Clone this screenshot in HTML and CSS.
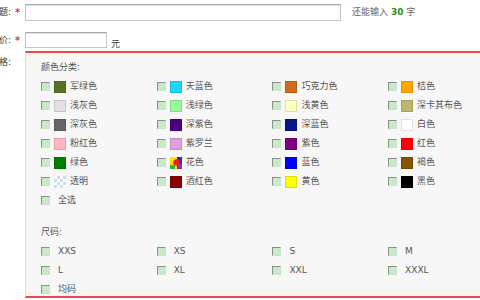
FILE: index.html
```html
<!DOCTYPE html>
<html lang="zh-CN">
<head>
<meta charset="utf-8">
<link rel="stylesheet" href="styles.css">
</head>
<body>
<div class="form">
  <div class="row row-title">
    <div class="lbl">标题:</div><span class="star">*</span>
    <input class="inp inp-title" type="text">
    <span class="hint">还能输入 <b>30</b> 字</span>
  </div>
  <div class="row row-price">
    <div class="lbl">一口价:</div><span class="star">*</span>
    <input class="inp inp-price" type="text">
    <span class="unit">元</span>
  </div>
  <div class="row row-spec">
    <div class="lbl lbl-spec">规格:</div><span class="spacer"></span>
    <div class="specbox">
      <div class="sec-title">颜色分类:</div>
      <div class="grid">
        <label class="item"><span class="cb"></span><span class="sw" style="background:#5b7224"></span>军绿色</label>
        <label class="item"><span class="cb"></span><span class="sw" style="background:#1ed6fb"></span>天蓝色</label>
        <label class="item"><span class="cb"></span><span class="sw" style="background:#d2691e"></span>巧克力色</label>
        <label class="item"><span class="cb"></span><span class="sw" style="background:#ffa500"></span>桔色</label>

        <label class="item"><span class="cb"></span><span class="sw" style="background:#e2e2e2"></span>浅灰色</label>
        <label class="item"><span class="cb"></span><span class="sw" style="background:#98fb98"></span>浅绿色</label>
        <label class="item"><span class="cb"></span><span class="sw" style="background:#ffffbe"></span>浅黄色</label>
        <label class="item"><span class="cb"></span><span class="sw" style="background:#bdb76b"></span>深卡其布色</label>

        <label class="item"><span class="cb"></span><span class="sw" style="background:#666666"></span>深灰色</label>
        <label class="item"><span class="cb"></span><span class="sw" style="background:#4b0082"></span>深紫色</label>
        <label class="item"><span class="cb"></span><span class="sw" style="background:#0a148a"></span>深蓝色</label>
        <label class="item"><span class="cb"></span><span class="sw" style="background:#ffffff"></span>白色</label>

        <label class="item"><span class="cb"></span><span class="sw" style="background:#ffb6c1"></span>粉红色</label>
        <label class="item"><span class="cb"></span><span class="sw" style="background:#dda0dd"></span>紫罗兰</label>
        <label class="item"><span class="cb"></span><span class="sw" style="background:#800080"></span>紫色</label>
        <label class="item"><span class="cb"></span><span class="sw" style="background:#ff0000"></span>红色</label>

        <label class="item"><span class="cb"></span><span class="sw" style="background:#008000"></span>绿色</label>
        <label class="item"><span class="cb"></span><span class="sw sw-flower"><svg width="12" height="12" viewBox="0 0 12 12"><rect width="12" height="12" fill="#ffe600"/><rect x="7" y="0" width="5" height="12" fill="#2b2bd8"/><rect x="8" y="7" width="4" height="5" fill="#9a2bb0"/><rect x="0" y="8" width="5" height="4" fill="#2fb84a"/><circle cx="6.5" cy="5.5" r="3.2" fill="#f01e1e"/></svg></span>花色</label>
        <label class="item"><span class="cb"></span><span class="sw" style="background:#0000ff"></span>蓝色</label>
        <label class="item"><span class="cb"></span><span class="sw" style="background:#855500"></span>褐色</label>

        <label class="item"><span class="cb"></span><span class="sw sw-clear"></span>透明</label>
        <label class="item"><span class="cb"></span><span class="sw" style="background:#8b0000"></span>酒红色</label>
        <label class="item"><span class="cb"></span><span class="sw" style="background:#ffff00"></span>黄色</label>
        <label class="item"><span class="cb"></span><span class="sw" style="background:#000000"></span>黑色</label>

        <label class="item item-plain"><span class="cb"></span>全选</label>
      </div>
      <div class="sec-title sec-size">尺码:</div>
      <div class="grid">
        <label class="item item-plain"><span class="cb"></span>XXS</label>
        <label class="item item-plain"><span class="cb"></span>XS</label>
        <label class="item item-plain"><span class="cb"></span>S</label>
        <label class="item item-plain"><span class="cb"></span>M</label>
        <label class="item item-plain"><span class="cb"></span>L</label>
        <label class="item item-plain"><span class="cb"></span>XL</label>
        <label class="item item-plain"><span class="cb"></span>XXL</label>
        <label class="item item-plain"><span class="cb"></span>XXXL</label>
        <label class="item item-plain"><span class="cb"></span>均码</label>
      </div>
    </div>
  </div>
</div>
</body>
</html>
```

FILE: styles.css
```css
html, body {
  margin: 0;
  padding: 0;
}
body {
  width: 480px;
  height: 300px;
  overflow: hidden;
  background: #fff;
  font-family: "DejaVu Sans", "Noto Sans CJK SC", sans-serif;
  font-size: 9px;
  line-height: 9px;
  color: #555;
}
.row {
  display: flex;
}
.row-title {
  align-items: center;
  height: 17px;
  margin-top: 4px;
}
.row-price {
  align-items: center;
  height: 16px;
  margin-top: 11px;
}
.lbl {
  width: 11px;
  flex: none;
  display: flex;
  justify-content: flex-end;
  white-space: nowrap;
  color: #333;
}
.star {
  width: 14px;
  flex: none;
  box-sizing: border-box;
  padding-left: 4px;
  color: #e8383d;
  font-size: 10px;
  font-weight: bold;
}
.spacer {
  width: 14px;
  flex: none;
}
.inp {
  margin: 0;
  padding: 0;
  box-sizing: border-box;
  border: 1px solid #c4c4c4;
  border-top-color: #a9a9a9;
  background: #fff;
  box-shadow: inset 0 1px 0 #e6e6e6;
  outline: none;
  flex: none;
}
.inp-title {
  width: 316px;
  height: 17px;
}
.inp-price {
  width: 82px;
  height: 16px;
}
.hint {
  margin-left: 11px;
  color: #666;
  white-space: nowrap;
}
.hint b {
  color: #2a8c14;
  font-weight: bold;
}
.unit {
  margin-left: 4px;
  align-self: flex-end;
  color: #333;
  margin-bottom: -1px;
}
.row-spec {
  margin-top: 3px;
  align-items: flex-start;
}
.lbl-spec {
  padding-top: 7px;
}
.specbox {
  flex: 1;
  height: 247px;
  box-sizing: border-box;
  overflow: hidden;
  background: #f7f7f7;
  border-top: 2px solid #e8484c;
  border-bottom: 2px solid #e8484c;
  border-left: 1px solid #dcdcdc;
  padding: 5px 0 0 15px;
}
.sec-title {
  height: 19px;
  line-height: 19px;
  color: #555;
}
.sec-size {
  margin-top: 13px;
}
.grid {
  display: grid;
  grid-template-columns: repeat(4, 115.7px);
  grid-auto-rows: 19px;
}
.item {
  display: flex;
  align-items: center;
  white-space: nowrap;
  color: #555;
}
.cb {
  width: 9px;
  height: 9px;
  flex: none;
  box-sizing: border-box;
  border: 1px solid;
  border-color: #8e8e8e #cde0cd #cde0cd #8e8e8e;
  background: #c6ebc6;
  margin-right: 4px;
}
.item-plain .cb {
  margin-right: 8px;
}
.sw {
  width: 12px;
  height: 12px;
  flex: none;
  box-sizing: border-box;
  border: 1px solid rgba(0, 0, 0, 0.12);
  margin-right: 4px;
  overflow: hidden;
}
.sw-flower {
  border: none;
}
.sw-flower svg {
  display: block;
}
.sw-clear {
  border: none;
  background: repeating-conic-gradient(#c8dcf4 0 25%, #ffffff 0 50%) 0 0 / 6px 6px;
}
```
